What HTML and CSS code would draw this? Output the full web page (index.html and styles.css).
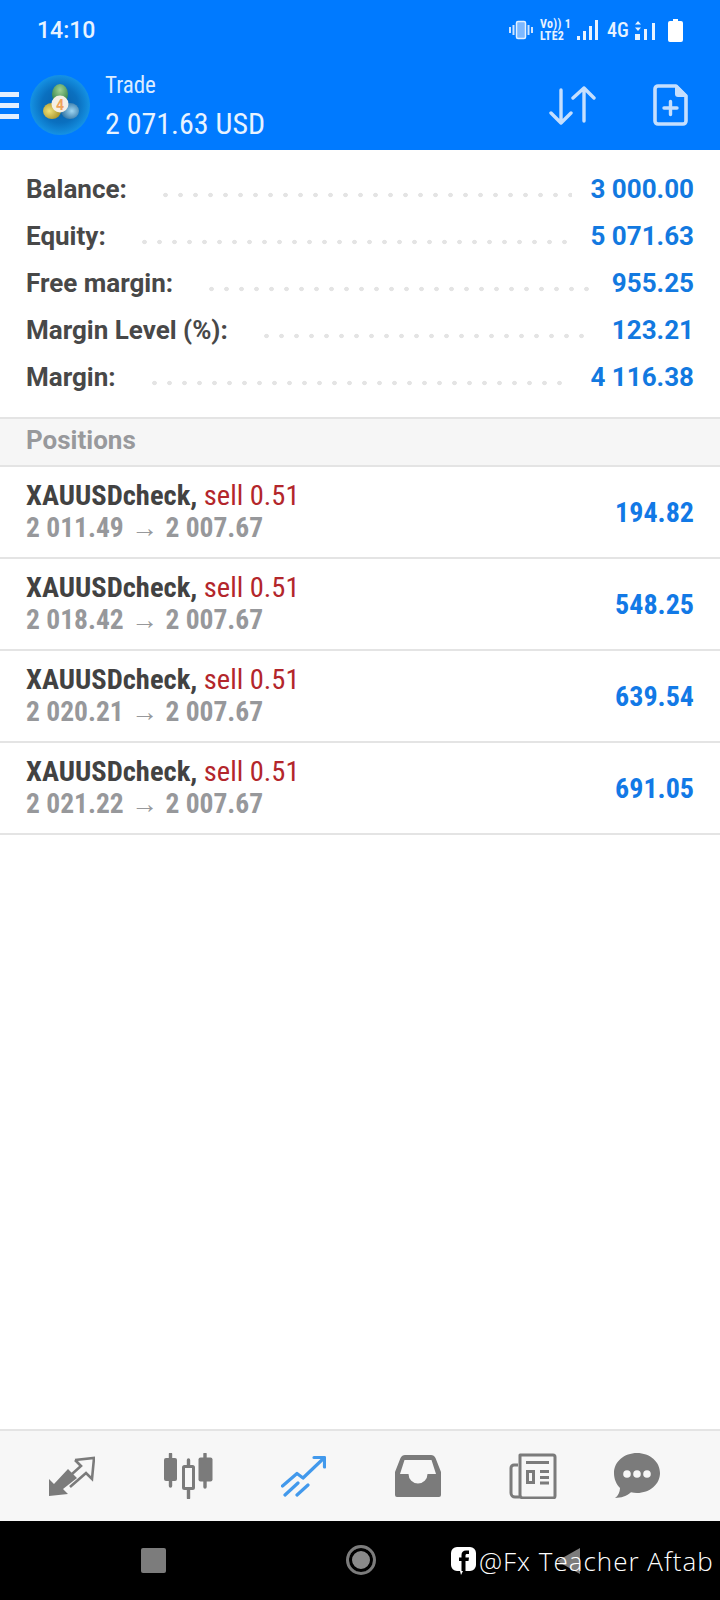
FILE: index.html
```html
<!DOCTYPE html>
<html lang="en">
<head>
<meta charset="utf-8">
<title>Trade</title>
<link rel="stylesheet" href="styles.css">
</head>
<body>
<div id="screen">
    <header class="topbar">
        <div class="statusbar">
            <span class="clock">14:10</span>
            <div class="statusicons">
                <svg class="vib" width="24" height="20" viewBox="0 0 24 20"><path d="M1 7v6M4.500 5v10M19.500 5v10M23 7v6" stroke="#cfe4ff" stroke-width="2" fill="none"/><rect x="7.500" y="1.500" width="9" height="17" rx="1.500" fill="#7db8ff" stroke="#e3f0ff" stroke-width="1.500"/></svg>
                <span class="volte"><span>Vo)) 1</span><span>LTE2</span></span>
                <svg class="bars" width="21" height="20" viewBox="0 0 21 20"><path d="M0 16h3v4H0zM6 11h3v9H6zM12 6h3v14h-3zM18 0h3v20h-3z" fill="#e8f3ff"/></svg>
                <span class="fourg">4G</span>
                <svg class="bars2" width="21" height="20" viewBox="0 0 21 20"><path d="M3 1l3 3.500H0zM3 11L0 7.500h6zM0 14h5v6H0zM9 9h3v11H9zM17 3h3v17h-3z" fill="#e8f3ff"/></svg>
                <svg class="batt" width="15" height="23" viewBox="0 0 15 23"><path d="M5 0h5v2h3a2 2 0 0 1 2 2v17a2 2 0 0 1-2 2H2a2 2 0 0 1-2-2V4a2 2 0 0 1 2-2h3z" fill="#fff"/></svg>
            </div>
        </div>
        <div class="toolbar">
            <div class="burger"><i></i><i></i><i></i></div>
            <svg class="logo" width="60" height="60" viewBox="0 0 60 60">
                <defs>
                    <radialGradient id="disc" cx="50%" cy="50%" r="50%">
                        <stop offset="0" stop-color="#0a5fa8"/>
                        <stop offset="0.6" stop-color="#0a70c0"/>
                        <stop offset="1" stop-color="#1592e4"/>
                    </radialGradient>
                    <radialGradient id="lobegreen" cx="50%" cy="30%" r="70%">
                        <stop offset="0" stop-color="#9fd296"/>
                        <stop offset="1" stop-color="#2f7f44"/>
                    </radialGradient>
                    <radialGradient id="lobeyellow" cx="35%" cy="50%" r="70%">
                        <stop offset="0" stop-color="#f0e27a"/>
                        <stop offset="1" stop-color="#a08a20"/>
                    </radialGradient>
                    <radialGradient id="lobeblue" cx="60%" cy="50%" r="70%">
                        <stop offset="0" stop-color="#9fd6f2"/>
                        <stop offset="1" stop-color="#1f6498"/>
                    </radialGradient>
                </defs>
                <circle cx="30" cy="30" r="30" fill="url(#disc)"/>
                <ellipse cx="30" cy="19" rx="8" ry="10" fill="url(#lobegreen)"/>
                <ellipse cx="22" cy="36" rx="9" ry="8" fill="url(#lobeyellow)"/>
                <ellipse cx="40" cy="36" rx="9" ry="8" fill="url(#lobeblue)"/>
                <circle cx="30" cy="29" r="8.500" fill="#f5efe6"/>
                <text x="30" y="34.500" class="logofour">4</text>
            </svg>
            <div class="account">
                <span class="acctitle">Trade</span>
                <span class="accvalue">2 071.63 USD</span>
            </div>
            <svg class="sorticon" width="47" height="41" viewBox="0 0 47 41"><path d="M12 5v33M2 28l10 10 10-10M35 36V3M24 13L35 3l10 10" fill="none" stroke="#c5dffe" stroke-width="3.400" stroke-linecap="round" stroke-linejoin="round"/></svg>
            <svg class="newicon" width="35" height="42" viewBox="0 0 35 42"><path d="M5 2h18l10 10v25a3 3 0 0 1-3 3H5a3 3 0 0 1-3-3V5a3 3 0 0 1 3-3z" fill="none" stroke="#c5dffe" stroke-width="3.600" stroke-linejoin="round"/><path d="M22 1h2l10 10v2H25a3 3 0 0 1-3-3z" fill="#c5dffe"/><path d="M11 24h13M17.500 17.500v13" stroke="#c5dffe" stroke-width="3.400" stroke-linecap="round"/></svg>
        </div>
    </header>

    <section class="summary">
        <div class="sumrow"><span class="sumlabel">Balance:</span><span class="dots"></span><span class="sumvalue">3 000.00</span></div>
        <div class="sumrow"><span class="sumlabel">Equity:</span><span class="dots"></span><span class="sumvalue">5 071.63</span></div>
        <div class="sumrow"><span class="sumlabel">Free margin:</span><span class="dots"></span><span class="sumvalue">955.25</span></div>
        <div class="sumrow"><span class="sumlabel">Margin Level (%):</span><span class="dots"></span><span class="sumvalue">123.21</span></div>
        <div class="sumrow"><span class="sumlabel">Margin:</span><span class="dots"></span><span class="sumvalue">4 116.38</span></div>
    </section>

    <div class="sectionhead">Positions</div>

    <div class="position">
        <div class="posinfo">
            <div class="posline"><b>XAUUSDcheck,</b> <span class="sell">sell 0.51</span></div>
            <div class="posprice">2 011.49 <span class="arrow">→</span> 2 007.67</div>
        </div>
        <div class="profit">194.82</div>
    </div>
    <div class="position">
        <div class="posinfo">
            <div class="posline"><b>XAUUSDcheck,</b> <span class="sell">sell 0.51</span></div>
            <div class="posprice">2 018.42 <span class="arrow">→</span> 2 007.67</div>
        </div>
        <div class="profit">548.25</div>
    </div>
    <div class="position">
        <div class="posinfo">
            <div class="posline"><b>XAUUSDcheck,</b> <span class="sell">sell 0.51</span></div>
            <div class="posprice">2 020.21 <span class="arrow">→</span> 2 007.67</div>
        </div>
        <div class="profit">639.54</div>
    </div>
    <div class="position">
        <div class="posinfo">
            <div class="posline"><b>XAUUSDcheck,</b> <span class="sell">sell 0.51</span></div>
            <div class="posprice">2 021.22 <span class="arrow">→</span> 2 007.67</div>
        </div>
        <div class="profit">691.05</div>
    </div>

    <div class="spacer"></div>

    <nav class="tabbar">
        <svg width="46" height="40" viewBox="0 0 46 40"><path d="M0 40V23l5 5 14-15 9 9-14 11 5 5z" fill="#7b7b7b"/><path d="M26 4L45 2l-2 21-6-6-16 14M26 4l6 6-9 8" fill="none" stroke="#7b7b7b" stroke-width="2.600"/></svg>
        <svg width="49" height="46" viewBox="0 0 49 46"><path d="M6.500 1v32M24.500 7v38M41 1v33" stroke="#7b7b7b" stroke-width="3.400" stroke-linecap="round"/><rect x="0" y="5" width="13" height="23" rx="2" fill="#7b7b7b"/><rect x="34.500" y="4.500" width="14" height="24" rx="2" fill="#7b7b7b"/><rect x="19.500" y="13.500" width="10" height="22" rx="1" fill="#f7f7f7" stroke="#7b7b7b" stroke-width="3"/></svg>
        <svg width="45" height="42" viewBox="0 0 45 42"><path d="M1.500 31L16 18.500l6 4.500 21-20" fill="none" stroke="#4299ec" stroke-width="3.200" stroke-linecap="round" stroke-linejoin="round"/><path d="M33 2.500h10.500V12" fill="none" stroke="#4299ec" stroke-width="3.200" stroke-linecap="round" stroke-linejoin="round"/><path d="M4 40l13-12M16 40l11-10" stroke="#4299ec" stroke-width="3.200" stroke-linecap="round"/></svg>
        <svg width="46" height="42" viewBox="0 0 46 42"><path d="M10 0h26c2 0 3.500 1 4.500 3L46 17v23a2 2 0 0 1-2 2H2a2 2 0 0 1-2-2V17L5.500 3C6.500 1 8 0 10 0zM9.500 5L5 19h8.500a9.500 9.500 0 0 0 19 0H41L36.500 5z" fill="#7b7b7b" fill-rule="evenodd"/></svg>
        <svg width="48" height="46" viewBox="0 0 48 46"><path d="M9 12H5a3 3 0 0 0-3 3v25a4 4 0 0 0 4 4h6M11 2h33a2 2 0 0 1 2 2v39a2 2 0 0 1-2 2H14a3 3 0 0 1-3-3z" fill="none" stroke="#7b7b7b" stroke-width="3" stroke-linejoin="round"/><path d="M17 8h23v3H17zM17 17h9v14h-9zM20 20v8h3v-8zM31 17h9v3h-9zM31 23h9v3h-9zM31 28.500h9v3h-9z" fill="#7b7b7b" fill-rule="evenodd"/></svg>
        <svg class="lasttab" width="46" height="46" viewBox="0 0 46 46"><path d="M23 0c12.700 0 23 8.700 23 20s-10.300 20-23 20c-2 0-4-.2-6-.7C13 43 7 45 1 45c3-2 5-6 5-10-3.700-3.700-6-9-6-15C0 8.700 10.300 0 23 0z" fill="#7b7b7b"/><circle cx="13" cy="21" r="3.800" fill="#f7f7f7"/><circle cx="23" cy="21" r="3.800" fill="#f7f7f7"/><circle cx="33" cy="21" r="3.800" fill="#f7f7f7"/></svg>
    </nav>

    <footer class="navbar">
        <span class="navsquare"></span>
        <span class="navhome"></span>
        <span class="navback"></span>
        <div class="watermark">
            <svg width="25" height="28" viewBox="0 0 25 28"><path d="M6 0h13a6 6 0 0 1 6 6v12a6 6 0 0 1-6 6h-7l-2 4-1-4H6a6 6 0 0 1-6-6V6a6 6 0 0 1 6-6z" fill="#fff"/><path d="M10.500 24V14H8v-3.500h2.500V8c0-3 1.700-4.500 4.500-4.500h3V7h-2c-1 0-1.500.5-1.500 1.500v2h3.500l-.5 3.500h-3v10z" fill="#000"/></svg>
            <span>@Fx Teacher Aftab</span>
        </div>
    </footer>
</div>
</body>
</html>
```

FILE: styles.css
```css
html, body{
    margin: 0;
    padding: 0;
}
body{
    font-family: Roboto, "Liberation Sans", sans-serif;
    background-color: #fff;
}
#screen{
    width: 720px;
    height: 1600px;
    overflow: hidden;
    display: flex;
    flex-direction: column;
}

/* top blue part */
.topbar{
    height: 150px;
    flex-shrink: 0;
    background-color: #007aff;
    color: #fff;
}
.statusbar{
    height: 60px;
    display: flex;
    align-items: center;
    justify-content: space-between;
    padding: 0 37px;
}
.clock{
    font-size: 23px;
    font-weight: 500;
    color: #e8f3ff;
}
.statusicons{
    display: flex;
    align-items: center;
}
.volte{
    display: flex;
    flex-direction: column;
    font-size: 12px;
    line-height: 12px;
    font-weight: 700;
    font-stretch: condensed;
    letter-spacing: .3px;
    margin-left: 7px;
    width: 24px;
    white-space: nowrap;
    color: #e8f3ff;
}
.bars{
    margin-left: 13px;
}
.fourg{
    width: 20px;
    font-size: 20px;
    font-weight: 500;
    font-stretch: condensed;
    margin-left: 9px;
    color: #e8f3ff;
}
.bars2{
    margin-left: 8px;
}
.batt{
    margin-left: 12px;
}
.toolbar{
    height: 90px;
    display: flex;
    align-items: center;
}
.burger{
    width: 19px;
    margin-right: 11px;
}
.burger i{
    display: block;
    height: 5px;
    background-color: #e3f0ff;
    margin: 6px 0;
}
.logo{
    flex-shrink: 0;
}
.logofour{
    font-size: 14px;
    font-weight: 700;
    fill: #f0a35a;
    text-anchor: middle;
}
.account{
    display: flex;
    flex-direction: column;
    margin-left: 15px;
    padding-top: 5px;
    flex-grow: 1;
    font-stretch: condensed;
}
.acctitle{
    font-size: 23px;
    line-height: 32px;
    color: #dcecff;
}
.accvalue{
    font-size: 30px;
    line-height: 43px;
    color: #e8f3ff;
}
.sorticon{
    margin-right: 57px;
}
.newicon{
    margin-right: 32px;
}

/* account summary */
.summary{
    height: 269px;
    flex-shrink: 0;
    padding-top: 15px;
    box-sizing: border-box;
    border-bottom: 2px solid #e4e4e4;
}
.sumrow{
    height: 47.2px;
    display: flex;
    align-items: center;
    padding: 0 26px;
}
.sumlabel{
    font-size: 26px;
    font-weight: 700;
    color: #484848;
}
.dots{
    flex-grow: 1;
    height: 6px;
    margin: 12px 18px 0 36px;
    background-image: radial-gradient(circle at 2.5px 3px, #e4e4e4 2px, transparent 2.6px);
    background-size: 15px 6px;
    background-repeat: repeat-x;
}
.sumvalue{
    font-size: 26px;
    font-weight: 700;
    color: #1279e0;
}

/* positions */
.sectionhead{
    height: 48px;
    flex-shrink: 0;
    box-sizing: border-box;
    padding-left: 26px;
    line-height: 42px;
    font-size: 26px;
    font-weight: 700;
    color: #98999c;
    background-color: #f6f6f6;
    border-bottom: 2px solid #e4e4e4;
}
.position{
    height: 92px;
    flex-shrink: 0;
    box-sizing: border-box;
    display: flex;
    align-items: center;
    justify-content: space-between;
    padding: 0 26px;
    border-bottom: 2px solid #e4e4e4;
    font-stretch: condensed;
}
.posline{
    font-size: 28.5px;
    line-height: 32px;
    color: #b3262b;
}
.posline b{
    color: #424242;
}
.posprice{
    font-size: 27.5px;
    line-height: 32px;
    font-weight: 700;
    color: #97989b;
}
.arrow{
    font-size: 27px;
    font-weight: 400;
    margin: 0 1px;
}
.profit{
    font-size: 28px;
    font-weight: 700;
    color: #1279e6;
}
.spacer{
    flex-grow: 1;
}

/* bottom tabs */
.tabbar{
    height: 92px;
    flex-shrink: 0;
    box-sizing: border-box;
    background-color: #f7f7f7;
    border-top: 2px solid #e4e4e4;
    display: flex;
    align-items: center;
    gap: 68.5px;
    padding-left: 49px;
}
.lasttab{
    margin-left: -12px;
}

/* phone nav, the watermark sits over it */
.navbar{
    height: 79px;
    flex-shrink: 0;
    background-color: #000;
    position: relative;
}
.navsquare{
    position: absolute;
    left: 141px;
    top: 27px;
    width: 25px;
    height: 25px;
    border-radius: 2px;
    background-color: #7c7c7c;
}
.navhome{
    position: absolute;
    left: 346px;
    top: 24px;
    width: 24px;
    height: 24px;
    border: 3px solid #7c7c7c;
    border-radius: 50%;
    box-shadow: inset 0 0 0 3px #000, inset 0 0 0 12px #8a8a8a;
}
.navback{
    position: absolute;
    left: 557px;
    top: 27px;
    width: 0;
    height: 0;
    border-style: solid;
    border-width: 13px 23px 13px 0;
    border-color: transparent #7c7c7c transparent transparent;
}
.watermark{
    position: absolute;
    left: 451px;
    top: 22px;
    display: flex;
    align-items: center;
    gap: 3px;
    color: #fff;
    font-size: 26px;
    font-weight: 300;
    letter-spacing: 1px;
    font-family: "Open Sans", sans-serif;
}
```
